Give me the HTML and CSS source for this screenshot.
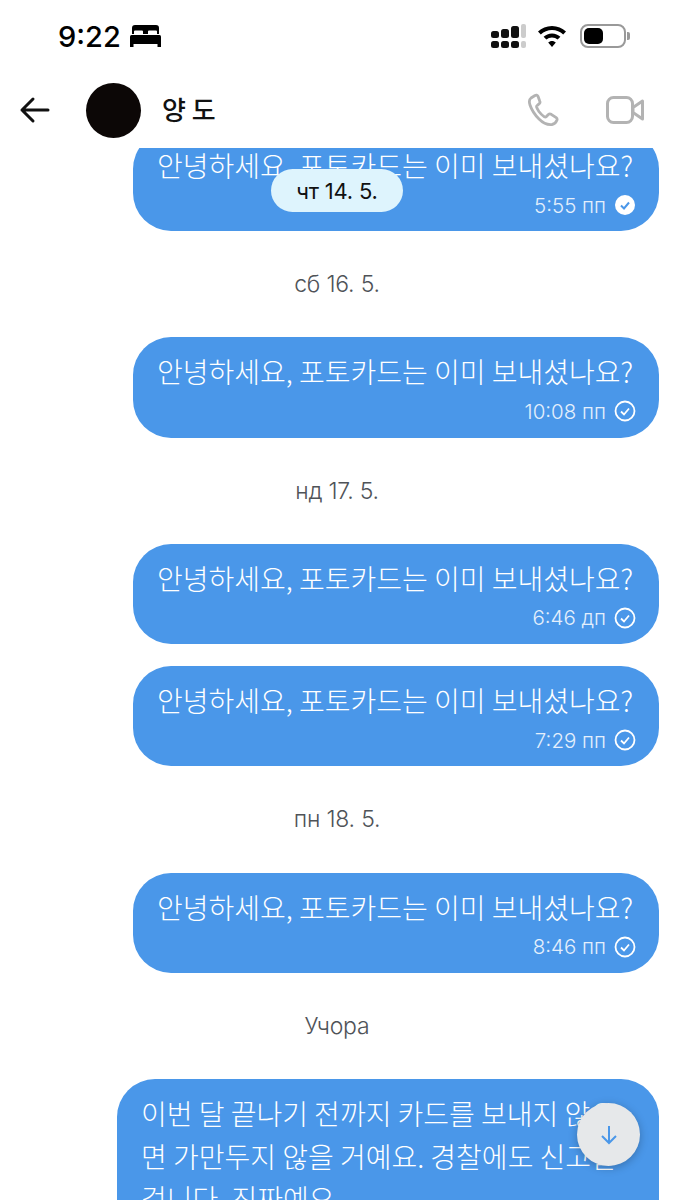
FILE: index.html
```html
<!DOCTYPE html>
<html lang="uk">
<head>
    <meta charset="UTF-8">
    <meta name="viewport" content="width=device-width, initial-scale=1.0">
    <title>Chat</title>
    <link rel="stylesheet" href="styles.css">
</head>
<body>
    <div class="statusbar">
        <div class="status-left">
            <span class="clock">9:22</span>
            <svg class="bed" width="31" height="22" viewBox="0 0 31 22">
                <path d="M5 0h21a3 3 0 0 1 3 3v6h-2V6.500a1 1 0 0 0-1-1h-7a1 1 0 0 0-1 1V9h-5V6.500a1 1 0 0 0-1-1H5a1 1 0 0 0-1 1V9H2V3a3 3 0 0 1 3-3z" fill="#000"/>
                <rect x="0" y="10" width="31" height="9" rx="1.500" fill="#000"/>
                <rect x="0" y="18" width="3.500" height="4" fill="#000"/>
                <rect x="27.500" y="18" width="3.500" height="4" fill="#000"/>
            </svg>
        </div>
        <div class="status-right">
            <svg width="35" height="24" viewBox="0 0 35 24">
                <rect x="0" y="7" width="8" height="7" rx="2.500" fill="#111"/>
                <rect x="10" y="5" width="8" height="9" rx="2.500" fill="#111"/>
                <rect x="20" y="2" width="8" height="12" rx="2.500" fill="#111"/>
                <rect x="30" y="0" width="5" height="14" rx="2" fill="#ccc"/>
                <rect x="0" y="17" width="8" height="7" rx="2.500" fill="#111"/>
                <rect x="10" y="17" width="8" height="7" rx="2.500" fill="#111"/>
                <rect x="20" y="17" width="8" height="7" rx="2.500" fill="#111"/>
                <rect x="30" y="17" width="5" height="7" rx="2" fill="#ccc"/>
            </svg>
            <svg width="30" height="24" viewBox="0 0 30 24">
                <path d="M15 2c5.500 0 10.300 2.100 14 5.600l-2.800 2.900A16.300 16.300 0 0 0 15 6 16.300 16.300 0 0 0 3.800 10.500L1 7.600C4.700 4.100 9.500 2 15 2z" fill="#000"/>
                <path d="M15 9.500c3.300 0 6.200 1.300 8.400 3.300l-2.800 2.800a8.200 8.200 0 0 0-11.200 0l-2.800-2.800c2.200-2 5.100-3.300 8.400-3.300z" fill="#000"/>
                <path d="M15 17c1.500 0 2.800.6 3.800 1.500L15 23l-3.800-4.500c1-.9 2.300-1.500 3.800-1.500z" fill="#000"/>
            </svg>
            <div class="battery"><div class="battery-fill"></div></div>
            <div class="battery-cap"></div>
        </div>
    </div>

    <div class="chat-header">
        <svg class="back" width="32" height="30" viewBox="0 0 32 30">
            <path d="M29 15H3M14 4 3 15l11 11" fill="none" stroke="#111" stroke-width="3" stroke-linecap="round" stroke-linejoin="round"/>
        </svg>
        <div class="avatar"></div>
        <div class="contact-name">양 도</div>
        <div class="header-actions">
            <svg width="34" height="34" viewBox="0 0 34 34">
                <path d="M8 2.500 4 5c-2 1.500-2 4-1 7 2 6 5 10 9 14 4 4 9 6 13 5.500 2-.3 4-2 5-4.500.3-1 0-1.800-.8-2.400l-5-3.300c-1-.6-2-.5-2.800.3l-2 2c-.6.500-1.300.6-2 .2-2-1.300-4-3.300-5.500-5.300-1-1.500-2-3-2.300-4.500-.1-.7.1-1.300.7-1.700l2-1.600c.7-.6.9-1.500.5-2.400L11 3.300C10.400 2 9 1.800 8 2.500z" fill="none" stroke="#b3b3b3" stroke-width="2.800" stroke-linejoin="round"/>
            </svg>
            <svg width="38" height="28" viewBox="0 0 38 28">
                <rect x="1.500" y="1.500" width="25" height="25" rx="6" fill="none" stroke="#b3b3b3" stroke-width="3"/>
                <path d="M27 11.500 36.500 5v18L27 16.500z" fill="none" stroke="#b3b3b3" stroke-width="3" stroke-linejoin="round"/>
            </svg>
        </div>
    </div>

    <div class="messages">
        <div class="date-pill">чт 14. 5.</div>

        <div class="bubble bubble-first">
            <div class="bubble-text">안녕하세요, 포토카드는 이미 보내셨나요?</div>
            <div class="meta">5:55 пп
                <svg class="tick" width="22" height="22" viewBox="0 0 22 22">
                    <circle cx="11" cy="11" r="10" fill="#fff"/>
                    <path d="M7 11.500l3 3 5-6" fill="none" stroke="#4a97e9" stroke-width="2"/>
                </svg>
            </div>
        </div>

        <div class="day">сб 16. 5.</div>
        <div class="bubble">
            <div class="bubble-text">안녕하세요, 포토카드는 이미 보내셨나요?</div>
            <div class="meta">10:08 пп
                <svg class="tick" width="22" height="22" viewBox="0 0 22 22">
                    <circle cx="11" cy="11" r="9.500" fill="none" stroke="#fff" stroke-width="1.800"/>
                    <path d="M7 11.500l3 3 5-6" fill="none" stroke="#fff" stroke-width="1.800"/>
                </svg>
            </div>
        </div>

        <div class="day">нд 17. 5.</div>
        <div class="bubble">
            <div class="bubble-text">안녕하세요, 포토카드는 이미 보내셨나요?</div>
            <div class="meta">6:46 дп
                <svg class="tick" width="22" height="22" viewBox="0 0 22 22">
                    <circle cx="11" cy="11" r="9.500" fill="none" stroke="#fff" stroke-width="1.800"/>
                    <path d="M7 11.500l3 3 5-6" fill="none" stroke="#fff" stroke-width="1.800"/>
                </svg>
            </div>
        </div>
        <div class="bubble bubble-next">
            <div class="bubble-text">안녕하세요, 포토카드는 이미 보내셨나요?</div>
            <div class="meta">7:29 пп
                <svg class="tick" width="22" height="22" viewBox="0 0 22 22">
                    <circle cx="11" cy="11" r="9.500" fill="none" stroke="#fff" stroke-width="1.800"/>
                    <path d="M7 11.500l3 3 5-6" fill="none" stroke="#fff" stroke-width="1.800"/>
                </svg>
            </div>
        </div>

        <div class="day">пн 18. 5.</div>
        <div class="bubble">
            <div class="bubble-text">안녕하세요, 포토카드는 이미 보내셨나요?</div>
            <div class="meta">8:46 пп
                <svg class="tick" width="22" height="22" viewBox="0 0 22 22">
                    <circle cx="11" cy="11" r="9.500" fill="none" stroke="#fff" stroke-width="1.800"/>
                    <path d="M7 11.500l3 3 5-6" fill="none" stroke="#fff" stroke-width="1.800"/>
                </svg>
            </div>
        </div>

        <div class="day">Учора</div>
        <div class="bubble bubble-long">
            <div class="bubble-text">이번 달 끝나기 전까지 카드를 보내지 않으<br>면 가만두지 않을 거예요. 경찰에도 신고할<br>겁니다. 진짜예요.</div>
        </div>

        <div class="scroll-down">
            <svg width="20" height="24" viewBox="0 0 20 24">
                <path d="M10 3v17M3 13l7 7 7-7" fill="none" stroke="#4a97e9" stroke-width="2"/>
            </svg>
        </div>
    </div>
</body>
</html>
```

FILE: styles.css
```css
* {
    box-sizing: border-box;
}
body {
    margin: 0;
    height: 1200px;
    overflow: hidden;
    background-color: #fff;
    font-family: Inter, "Noto Sans CJK KR", sans-serif;
    color: #111;
}
.statusbar {
    height: 72px;
    padding: 0 44px 0 58px;
    display: flex;
    justify-content: space-between;
    align-items: center;
}
.status-left {
    display: flex;
    align-items: center;
    gap: 9px;
}
.clock {
    font-size: 29px;
    font-weight: 500;
    color: #000;
}
.status-right {
    display: flex;
    align-items: center;
    gap: 11px;
}
.battery {
    width: 46px;
    height: 24px;
    margin-left: 2px;
    border: 2px solid #999;
    border-radius: 8px;
    padding: 2px;
}
.battery-fill {
    width: 19px;
    height: 100%;
    background-color: #000;
    border-radius: 5px;
}
.battery-cap {
    width: 3px;
    height: 8px;
    margin-left: -10px;
    background-color: #999;
    border-radius: 0 2px 2px 0;
}
.chat-header {
    height: 76px;
    padding: 0 30px 0 19px;
    display: flex;
    align-items: center;
}
.avatar {
    width: 55px;
    height: 55px;
    margin-left: 35px;
    border-radius: 50%;
    background-color: #0c0706;
}
.contact-name {
    margin: -3px 0 0 21px;
    font-size: 26px;
    font-weight: 500;
    font-family: "Noto Sans CJK KR", sans-serif;
}
.header-actions {
    margin-left: auto;
    display: flex;
    align-items: center;
    gap: 45px;
}
.messages {
    position: relative;
    height: 1052px;
    overflow: hidden;
    padding: 0 15px 0 133px;
}
.date-pill {
    position: absolute;
    left: 271px;
    top: 21px;
    width: 132px;
    height: 43px;
    border-radius: 22px;
    background-color: #def4fd;
    display: flex;
    align-items: center;
    justify-content: center;
    font-size: 22px;
    letter-spacing: -0.2px;
}
.day {
    height: 106.3px;
    margin-left: -133px;
    margin-right: -15px;
    display: flex;
    align-items: center;
    justify-content: center;
    font-size: 23px;
    font-weight: 300;
    letter-spacing: -0.2px;
    color: #4f5358;
}
.bubble {
    height: 100.2px;
    padding: 14px 24px 0;
    border-radius: 38px;
    background-color: #4a97e9;
    color: #fff;
    font-family: "Noto Sans CJK KR", sans-serif;
}
.bubble-first {
    margin-top: -17px;
}
.bubble-next {
    margin-top: 22px;
}
.bubble-long {
    height: 300px;
    margin-left: -16px;
}
.bubble-text {
    font-size: 28px;
    font-weight: 300;
    line-height: 40px;
    white-space: nowrap;
}
.bubble-long .bubble-text {
    line-height: 42.500px;
    margin-top: -1px;
}
.meta {
    display: flex;
    align-items: center;
    justify-content: flex-end;
    gap: 8px;
    height: 24px;
    margin: 8px -1px 0 0;
    font-family: Inter, sans-serif;
    font-size: 20.500px;
    font-weight: 300;
    color: #e4effc;
}
.tick {
    flex: none;
}
.scroll-down {
    position: absolute;
    left: 577px;
    top: 955px;
    width: 63px;
    height: 63px;
    border-radius: 50%;
    background-color: #e6e8ea;
    box-shadow: 0 2px 8px rgba(0, 0, 0, 0.25);
    display: flex;
    align-items: center;
    justify-content: center;
}
```
